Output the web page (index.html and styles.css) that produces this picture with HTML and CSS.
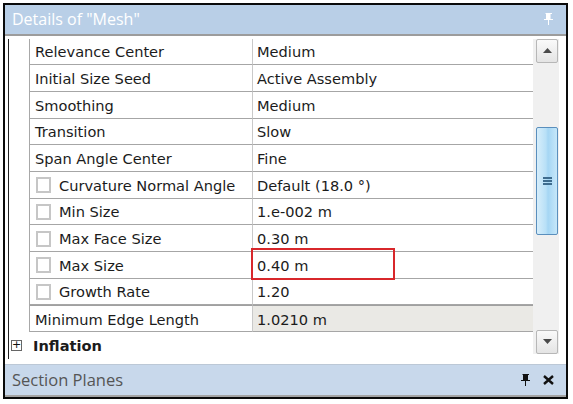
FILE: index.html
```html
<!DOCTYPE html>
<html>
<head>
<meta charset="utf-8">
<title>Details of "Mesh"</title>
<link rel="stylesheet" href="styles.css">
</head>
<body>
  <!-- Details pane -->
  <div class="frame">
    <div class="title">
      <span>Details of "Mesh"</span>
      <svg class="pin" width="10" height="14" viewBox="0 0 10 14">
        <path d="M2 1h6v1h-1v5h2v1h-4v5h-1v-5h-4v-1h2v-5h-1z" fill="#fff"/>
        <rect x="6" y="2" width="1" height="5" fill="#dfe8f3"/>
      </svg>
    </div>

    <div class="body">
      <div class="grid">
        <div class="rows">
          <div class="row">
            <div class="gutter"></div>
            <div class="name">Relevance Center</div>
            <div class="value">Medium</div>
          </div>
          <div class="row">
            <div class="gutter"></div>
            <div class="name">Initial Size Seed</div>
            <div class="value">Active Assembly</div>
          </div>
          <div class="row">
            <div class="gutter"></div>
            <div class="name">Smoothing</div>
            <div class="value">Medium</div>
          </div>
          <div class="row">
            <div class="gutter"></div>
            <div class="name">Transition</div>
            <div class="value">Slow</div>
          </div>
          <div class="row">
            <div class="gutter"></div>
            <div class="name">Span Angle Center</div>
            <div class="value">Fine</div>
          </div>
          <div class="row">
            <div class="gutter"></div>
            <div class="name"><span class="check"></span>Curvature Normal Angle</div>
            <div class="value">Default (18.0 °)</div>
          </div>
          <div class="row">
            <div class="gutter"></div>
            <div class="name"><span class="check"></span>Min Size</div>
            <div class="value">1.e-002 m</div>
          </div>
          <div class="row">
            <div class="gutter"></div>
            <div class="name"><span class="check"></span>Max Face Size</div>
            <div class="value">0.30 m</div>
          </div>
          <div class="row">
            <div class="gutter"></div>
            <div class="name"><span class="check"></span>Max Size</div>
            <div class="value marked">0.40 m<span class="highlight"></span></div>
          </div>
          <div class="row">
            <div class="gutter"></div>
            <div class="name"><span class="check"></span>Growth Rate</div>
            <div class="value">1.20</div>
          </div>
          <div class="row readonly">
            <div class="gutter"></div>
            <div class="name">Minimum Edge Length</div>
            <div class="value">1.0210 m</div>
          </div>
          <div class="row group">
            <div class="gutter"><span class="expand">+</span></div>
            <div class="group-name">Inflation</div>
          </div>
        </div>

        <!-- scrollbar -->
        <div class="scrollbar">
          <div class="sb-btn">
            <svg width="9" height="5" viewBox="0 0 9 5"><path d="M4.5 0L9 5H0z" fill="#4a4a4a"/></svg>
          </div>
          <div class="sb-track">
            <div class="sb-thumb">
              <span class="grip"></span>
            </div>
          </div>
          <div class="sb-btn">
            <svg width="9" height="5" viewBox="0 0 9 5"><path d="M0 0H9L4.5 5z" fill="#4a4a4a"/></svg>
          </div>
        </div>
      </div>
    </div>

    <div class="section">
      <span>Section Planes</span>
      <div class="tools">
        <svg width="10" height="14" viewBox="0 0 10 14">
          <path d="M2 1h6v1h-1v5h2v1h-4v5h-1v-5h-4v-1h2v-5h-1z" fill="#111"/>
        </svg>
        <svg width="11" height="10" viewBox="0 0 11 10">
          <path d="M1 1L10 9M10 1L1 9" stroke="#111" stroke-width="2.4"/>
        </svg>
      </div>
    </div>
  </div>
</body>
</html>
```

FILE: styles.css
```css
* {box-sizing: border-box;}

body {
  margin: 0;
  background: #fff;
  font-family: "Open Sans", "DejaVu Sans", sans-serif;
}

.frame {
  margin: 3px 0 0 3px;
  width: 565px;
  height: 396px;
  border: 2px solid #0a0a0a;
  display: flex;
  flex-direction: column;
  background: #fff;
}

/* pane header */
.title {
  height: 31px;
  background: #b9cfe7;
  border-bottom: 2px solid #9c9c9c;
  display: flex;
  align-items: center;
  justify-content: space-between;
  padding: 0 12px 0 7px;
  color: #fff;
  font-size: 16px;
}

.body {
  height: 323px;
  padding: 3px 7px 0 3px;
}

.grid {
  height: 100%;
  display: flex;
  border-left: 1px solid #222;
}

.rows {
  flex: 1;
  display: flex;
  flex-direction: column;
}

.row {
  display: flex;
  height: 26.7px;
  font-family: "DejaVu Sans", sans-serif;
  font-size: 14.6px;
  color: #1b1b1b;
}

.gutter {
  width: 21px;
  border-right: 1px solid #a8a8a8;
  display: flex;
  align-items: center;
  padding-left: 2px;
}

.name {
  width: 223px;
  border-right: 1px solid #c9c9c9;
  border-bottom: 1px solid #a6a6a6;
  display: flex;
  align-items: center;
  padding: 1px 0 0 5px;
}

.value {
  flex: 1;
  border-bottom: 1px solid #a6a6a6;
  display: flex;
  align-items: center;
  padding: 1px 0 0 4px;
}

.check {
  width: 15px;
  height: 16px;
  border: 2px solid #c6c6c6;
  margin: 0 8px 0 1px;
}

.readonly .name,
.readonly .value {
  border-top: 1px solid #a0a0a0;
}

.readonly .value {
  background: #eae9e5;
}

.marked {
  position: relative;
}

.highlight {
  position: absolute;
  left: -2px;
  top: -4px;
  width: 144px;
  height: 32px;
  border: 2px solid #d8272b;
}

.group .gutter {
  border-right: none;
}

.expand {
  width: 11px;
  height: 11px;
  border: 1px solid #666;
  font-size: 11px;
  line-height: 8px;
  text-align: center;
  color: #111;
}

.group-name {
  padding-left: 3px;
  display: flex;
  align-items: center;
  font-weight: bold;
  font-size: 14.6px;
}

/* scrollbar */
.scrollbar {
  width: 26px;
  height: 315px;
  padding: 0 1px 0 3px;
  background: #f0f0f0;
  display: flex;
  flex-direction: column;
}

.sb-btn {
  height: 24px;
  border: 1px solid #b7b7b7;
  border-radius: 2px;
  background: linear-gradient(#fafafa, #e4e4e4);
  display: flex;
  align-items: center;
  justify-content: center;
}

.sb-track {
  flex: 1;
  padding-top: 64px;
  padding-bottom: 95px;
}

.sb-thumb {
  height: 100%;
  border: 1px solid #5a8fbd;
  border-radius: 2px;
  background: linear-gradient(90deg, #d7eefb 0%, #b8e0f7 45%, #a5d6f4 55%, #c6e7f9 100%);
  display: flex;
  align-items: center;
  justify-content: center;
}

.grip {
  width: 9px;
  height: 8px;
  border-top: 2px solid #3e6c8e;
  border-bottom: 2px solid #3e6c8e;
  position: relative;
}

.grip::after {
  content: "";
  position: absolute;
  left: 0;
  right: 0;
  top: 1px;
  border-top: 2px solid #3e6c8e;
}

/* collapsed pane */
.section {
  margin-top: 5px;
  height: 34px;
  background: #c8d8eb;
  border-top: 1px solid #bcc8d6;
  border-bottom: 2px solid #a4a4a4;
  display: flex;
  align-items: center;
  justify-content: space-between;
  padding: 0 12px 0 7px;
  color: #555;
  font-size: 16.5px;
}

.tools {
  display: flex;
  gap: 12px;
  align-items: center;
}
```
